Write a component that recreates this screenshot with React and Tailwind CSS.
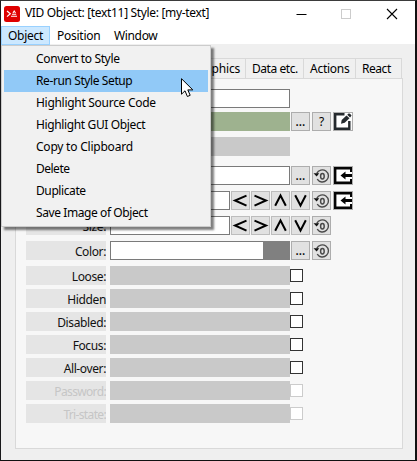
import React from "react";

const MENU = [
  { label: "Convert to Style", cls: "tracking-[-0.35px]" },
  { label: "Re-run Style Setup", cls: "bg-[#91c9f7] tracking-[-0.4px]" },
  { label: "Highlight Source Code", cls: "tracking-[-0.29px]" },
  { label: "Highlight GUI Object", cls: "tracking-[-0.37px]" },
  { label: "Copy to Clipboard", cls: "tracking-[-0.22px]" },
  { label: "Delete", cls: "tracking-[-0.5px]" },
  { label: "Duplicate", cls: "tracking-[-0.4px]" },
  { label: "Save Image of Object", cls: "tracking-[-0.41px]" },
];

const TOGGLES = [
  { label: "Loose:" },
  { label: "Hidden" },
  { label: "Disabled:" },
  { label: "Focus:" },
  { label: "All-over:" },
  { label: "Password:", off: true },
  { label: "Tri-state:", off: true },
];

function Label({ children, off }) {
  return (
    <div
      className={`mr-1 flex h-[19px] w-20 shrink-0 items-center justify-end overflow-hidden whitespace-nowrap bg-[#e5e5e5] pt-[3px] leading-4 ${off ? "tracking-[-0.65px] text-[#c6c6c6]" : "tracking-[-0.38px] text-[#111]"}`}
    >
      {children}
    </div>
  );
}

function Button({ children, className = "" }) {
  return (
    <div className={`flex h-[19px] w-[19px] shrink-0 items-center justify-center border border-[#adadad] bg-[#e1e1e1] ${className}`}>
      {children}
    </div>
  );
}

function Dots() {
  return (
    <Button className="ml-px">
      <span className="text-[12px] font-medium leading-4">...</span>
    </Button>
  );
}

function ResetButton() {
  return (
    <Button className="ml-[2px]">
      <svg width="17" height="17" viewBox="0 0 17 17" fill="none" stroke="#4a4a4a">
        <path d="M3.800 6.400A6.100 6.100 0 1 1 4.200 12.200" strokeWidth="1.350" />
        <path d="M.5 6.200H6.200L3.700 9.600Z" fill="#111" stroke="none" />
        <ellipse cx="9.400" cy="9.200" rx="1.800" ry="2.700" strokeWidth="1.500" />
      </svg>
    </Button>
  );
}

function ImportButton() {
  return (
    <div className="ml-[2px] h-[19px] w-5 border border-[#adadad] bg-[#f7f7f7]">
      <svg width="18" height="17" viewBox="0 0 18 17">
        <path d="M18 1.200H1.200V15.700H18" fill="#fff" stroke="#050505" strokeWidth="2.400" />
        <path d="M17 .5V5M17 12V16.500" stroke="#050505" strokeWidth="2" />
        <path d="M6.500 8.500L11.500 4.500V7H18V10H11.500V12.500Z" fill="#050505" />
      </svg>
    </div>
  );
}

function EditButton() {
  return (
    <div className="ml-[2px] h-[19px] w-5 border border-[#adadad] bg-[#f7f7f7]">
      <svg width="18" height="17" viewBox="0 0 18 17">
        <path d="M10.500 1.200H1.200V15.700H15.300V8" fill="#fff" stroke="#252a2e" strokeWidth="2.400" />
        <path d="M11 0H18V8H13Z" fill="#fff" />
        <path d="M7 10.700L7.700 7L12.500 2.500L15.500 5.300L10.700 9.800Z" fill="#252a2e" />
        <path d="M13.200 1.800L14.600.6Q15.300.1 16 .8L17.200 1.900Q17.800 2.500 17.200 3.100L16.100 4.500Z" fill="#252a2e" />
      </svg>
    </div>
  );
}

const ARROWS = ["M15 4.200L3.500 9L15 14.200", "M3 4.200L14.500 9L3 14.200", "M3.700 14.300L9 4L14.300 14.300", "M3.700 3.700L9 14L14.300 3.700"];

function Arrows() {
  return (
    <div className="ml-px flex gap-px">
      {ARROWS.map((d) => (
        <Button key={d} className="border-[#bdbdbd]">
          <svg width="17" height="17" viewBox="0.5 0.5 17 17" fill="none" stroke="#000" strokeWidth="2">
            <path d={d} />
          </svg>
        </Button>
      ))}
    </div>
  );
}

function Field({ className = "" }) {
  return <div className={`h-[19px] shrink-0 border border-[#7a7a7a] bg-white ${className}`} />;
}

export default function App() {
  return (
    <div className="relative flex h-[461px] w-[417px] flex-col overflow-hidden border-b border-l border-r-2 border-t border-b-[#111] border-l-[#18181a] border-r-[#111] border-t-[#3b3b3b] bg-[#efefef] font-['Noto_Sans',sans-serif] text-[12px] text-black">
      <div className="flex h-[25px] shrink-0 items-center bg-white pl-[3px]">
        <svg width="16" height="16" viewBox="0 0 16 16" fill="none" stroke="#fff">
          <rect width="16" height="16" rx="2.500" fill="#df0000" stroke="none" />
          <path d="M3 5L6.300 7.800L3 10.600" strokeWidth="1.2" />
          <path d="M7 10.300H13M8 8.300H12.200M9 7L10.200 5L11.500 7" strokeWidth="1.1" />
        </svg>
        <span className="mb-px ml-[5px] w-[187px] whitespace-nowrap leading-4 tracking-[-0.33px]">VID Object: [text11] Style: [my-text]</span>
        <svg className="ml-[84px]" width="104" height="16" viewBox="295 5 104 16" fill="none">
          <path d="M295.500 13.500H305.500" stroke="#000" />
          <rect x="340.500" y="8.500" width="9" height="9" stroke="#ccc" />
          <path d="M386 8L396 18M396 8L386 18" stroke="#000" strokeWidth="1.1" />
        </svg>
      </div>

      <div className="flex h-[18px] shrink-0 bg-white">
        <div className="flex h-[19px] w-[49px] items-center justify-center border border-[#99d1ff] bg-[#cce8ff] leading-4 tracking-[-0.25px]">Object</div>
        <span className="ml-[7px] w-[57px] pt-[2px] leading-4 tracking-[-0.25px]">Position</span>
        <span className="pt-[2px] leading-4 tracking-[-0.35px]">Window</span>
      </div>

      <div className="ml-[14px] mt-[14px] flex h-5 w-[387px] shrink-0 border-l border-t border-[#d9d9d9] bg-[#f0f0f0] leading-5">
        <div className="w-[230px] border-r border-[#d9d9d9] pr-[5px] text-right tracking-[-0.2px]">Graphics</div>
        <div className="w-[58px] whitespace-nowrap border-r border-[#d9d9d9] pl-[6px] tracking-[-0.45px]">Data etc.</div>
        <div className="w-[52px] border-r border-[#d9d9d9] pl-[6px] tracking-[-0.25px]">Actions</div>
        <div className="flex-1 border-r border-[#d9d9d9] pl-[6px] tracking-[-0.45px]">React</div>
      </div>

      <div className="ml-[14px] flex h-[371px] w-[388px] shrink-0 flex-col border border-[#d9d9d9] bg-[#f7f7f7] pl-[10px] pt-[10px]">
        <div className="flex"><Label /><Field className="w-[180px]" /></div>
        <div className="mt-1 flex">
          <Label />
          <div className="h-[19px] w-[180px] bg-[#9eb28f]" />
          <Dots />
          <Button className="ml-[2px]"><span className="leading-4">?</span></Button>
          <EditButton />
        </div>
        <div className="mt-[6px] flex"><Label /><div className="h-[19px] w-[180px] bg-[#c9c9c9]" /></div>
        <div className="mt-[10px] flex">
          <Label /><Field className="w-[180px]" /><Dots /><ResetButton /><ImportButton />
        </div>
        <div className="mt-[6px] flex">
          <Label /><Field className="w-[120px]" /><Arrows />
          <ResetButton /><ImportButton />
        </div>
        <div className="mt-[6px] flex">
          <Label>Size:</Label><Field className="w-[120px]" /><Arrows />
          <ResetButton />
        </div>
        <div className="mt-[6px] flex">
          <Label>Color:</Label>
          <Field className="w-[153px] border-r-0" />
          <div className="h-[19px] w-[27px] bg-[#808080]" />
          <Dots /><ResetButton />
        </div>
        <div className="mt-[6px] flex flex-col gap-1">
          {TOGGLES.map((t) => (
            <div key={t.label} className="flex">
              <Label off={t.off}>{t.label}</Label>
              <div className="h-[19px] w-[180px] bg-[#c9c9c9]" />
              <div className={`mt-[3px] h-[13px] w-[13px] border bg-white ${t.off ? "border-[#ccc]" : "border-[#333]"}`} />
            </div>
          ))}
        </div>
      </div>

      <div className="absolute left-0 top-[44px] h-[182px] w-[210px] border border-[#ccc] bg-[#f1f1f1] px-[2px] py-[2px] shadow-[3px_3px_2px_rgba(0,0,0,0.5)]">
        {MENU.map((m) => (
          <div key={m.label} className={`flex h-[22px] items-center whitespace-nowrap pl-8 leading-4 ${m.cls}`}>
            {m.label}
          </div>
        ))}
      </div>

      <svg className="absolute left-[180px] top-[77px]" width="13" height="20" viewBox="0 0 13 20">
        <path d="M.5.7V16.200L4 12.800L6.400 18.500L9.200 17.300L6.800 11.900H11.800Z" fill="#fff" stroke="#000" />
      </svg>
    </div>
  );
}
